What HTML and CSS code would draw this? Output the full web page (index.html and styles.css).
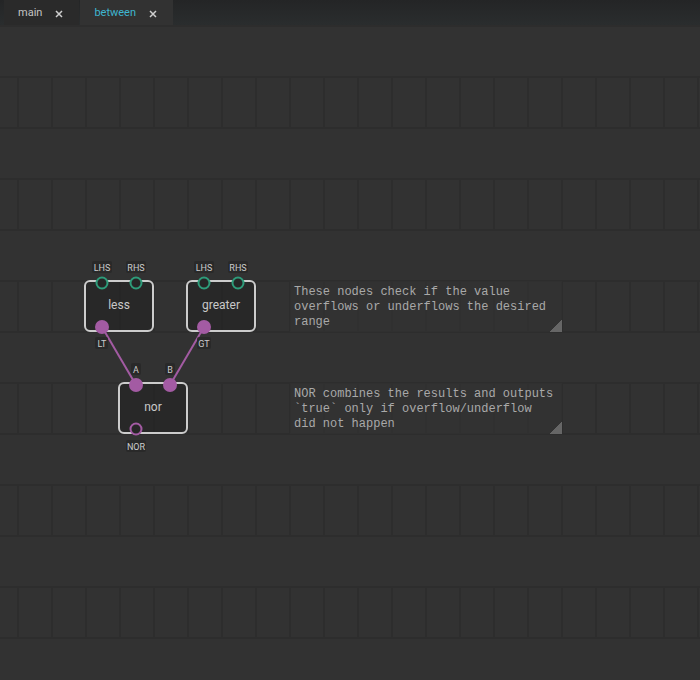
FILE: index.html
```html
<!DOCTYPE html>
<html>
<head>
<meta charset="utf-8">
<link rel="stylesheet" href="styles.css">
</head>
<body>
<div class="app">
  <div class="tabbar">
    <div class="tab">
      <span class="tab-title">main</span>
      <svg class="tab-close" width="8" height="8" viewBox="0 0 8 8"><path d="M1 1L7 7M7 1L1 7"/></svg>
    </div>
    <div class="tab tab-active">
      <span class="tab-title">between</span>
      <svg class="tab-close" width="8" height="8" viewBox="0 0 8 8"><path d="M1 1L7 7M7 1L1 7"/></svg>
    </div>
  </div>
  <div class="canvas">
    <svg class="diagram" width="700" height="655" viewBox="0 25 700 655">
      <line class="link" x1="102" y1="327" x2="136" y2="385"/>
      <line class="link" x1="204" y1="327" x2="170" y2="385"/>

      <!-- less -->
      <rect class="node-body" x="85" y="281" width="68" height="50" rx="5"/>
      <text class="node-title" x="119" y="309">less</text>
      <rect class="pin-label-bg" x="92" y="261" width="20" height="12" rx="2"/>
      <text class="pin-label" x="102" y="270.5">LHS</text>
      <rect class="pin-label-bg" x="126" y="261" width="20" height="12" rx="2"/>
      <text class="pin-label" x="136" y="270.5">RHS</text>
      <circle class="pin pin-num" cx="102" cy="283" r="5.5"/>
      <circle class="pin pin-num" cx="136" cy="283" r="5.5"/>
      <circle class="pin-fill" cx="102" cy="327" r="7"/>
      <rect class="pin-label-bg" x="95" y="337" width="13" height="12" rx="2"/>
      <text class="pin-label" x="102" y="346.5">LT</text>

      <!-- greater -->
      <rect class="node-body" x="187" y="281" width="68" height="50" rx="5"/>
      <text class="node-title" x="221" y="309">greater</text>
      <rect class="pin-label-bg" x="194" y="261" width="20" height="12" rx="2"/>
      <text class="pin-label" x="204" y="270.5">LHS</text>
      <rect class="pin-label-bg" x="228" y="261" width="20" height="12" rx="2"/>
      <text class="pin-label" x="238" y="270.5">RHS</text>
      <circle class="pin pin-num" cx="204" cy="283" r="5.5"/>
      <circle class="pin pin-num" cx="238" cy="283" r="5.5"/>
      <circle class="pin-fill" cx="204" cy="327" r="7"/>
      <rect class="pin-label-bg" x="197" y="337" width="14" height="12" rx="2"/>
      <text class="pin-label" x="204" y="346.5">GT</text>

      <!-- nor -->
      <rect class="node-body" x="119" y="383" width="68" height="50" rx="5"/>
      <text class="node-title" x="153" y="411">nor</text>
      <rect class="pin-label-bg" x="131" y="363" width="10" height="12" rx="2"/>
      <text class="pin-label" x="136" y="372.5">A</text>
      <rect class="pin-label-bg" x="165" y="363" width="10" height="12" rx="2"/>
      <text class="pin-label" x="170" y="372.5">B</text>
      <circle class="pin-fill" cx="136" cy="385" r="7"/>
      <circle class="pin-fill" cx="170" cy="385" r="7"/>
      <circle class="pin pin-bool" cx="136" cy="429" r="5.5"/>
      <rect class="pin-label-bg" x="126" y="440" width="20" height="12" rx="2"/>
      <text class="pin-label" x="136" y="449.5">NOR</text>
    </svg>

    <div class="comment comment-1">These nodes check if the value
overflows or underflows the desired
range<span class="resize"></span></div>
    <div class="comment comment-2">NOR combines the results and outputs
`true` only if overflow/underflow
did not happen<span class="resize"></span></div>
  </div>
</div>
</body>
</html>
```

FILE: styles.css
```css
html, body {
  margin: 0;
  padding: 0;
  background: #323232;
}
.app {
  width: 700px;
  height: 680px;
  overflow: hidden;
  font-family: Roboto, "Liberation Sans", sans-serif;
}
.tabbar {
  height: 25px;
  display: flex;
  gap: 1px;
  padding-left: 4px;
  background: linear-gradient(to bottom, #242526, #2a2d2e);
}
.tab {
  display: flex;
  align-items: center;
  gap: 13px;
  padding: 0 16px 0 14px;
  background: #2a2a2a;
  height: 25px;
}
.tab-active {
  background: #323232;
}
.tab-title {
  font-size: 11px;
  color: #c4c4c4;
  line-height: 25px;
}
.tab-active .tab-title {
  color: #3fb5cf;
}
.tab-close {
  display: block;
  stroke: #cfcfcf;
  stroke-width: 1.5;
  fill: none;
  margin-top: 2px;
}
.canvas {
  position: relative;
  height: 655px;
  background-color: #323232;
  background-image:
    linear-gradient(to bottom, #2d2d2d 0 2px, transparent 2px),
    linear-gradient(to bottom, #323232 0 51px, transparent 51px),
    linear-gradient(to right, #2d2d2d 0 2px, transparent 2px);
  background-size: 100% 51px, 100% 102px, 34px 100%;
  background-position: 0 0, 0 0, 17px 0;
}
.diagram {
  position: absolute;
  left: 0;
  top: 0;
}
.link {
  stroke: #a35ba3;
  stroke-width: 2;
}
.node-body {
  fill: rgba(36, 36, 36, 0.7);
  stroke: #cccccc;
  stroke-width: 2;
}
.node-title {
  font-family: Roboto, "Liberation Sans", sans-serif;
  font-size: 12px;
  fill: #c8c8c8;
  text-anchor: middle;
}
.pin-label-bg {
  fill: rgba(40, 40, 40, 0.9);
}
.pin-label {
  font-family: Roboto, "Liberation Sans", sans-serif;
  font-size: 9px;
  fill: #cccccc;
  text-anchor: middle;
}
.pin {
  fill: #262626;
  stroke-width: 2;
}
.pin-num {
  stroke: #2e9c7a;
}
.pin-bool {
  stroke: #a35ba3;
}
.pin-fill {
  fill: #a35ba3;
}
.comment {
  position: absolute;
  width: 268px;
  height: 47px;
  padding: 4px 0 0 4px;
  font-family: "Liberation Mono", monospace;
  font-size: 12px;
  line-height: 15px;
  color: #a9a9a9;
  white-space: pre;
  background: rgba(50, 50, 50, 0.6);
}
.comment-1 {
  left: 290px;
  top: 256px;
}
.comment-2 {
  left: 290px;
  top: 358px;
}
.resize {
  position: absolute;
  right: 0;
  bottom: 0;
  width: 12px;
  height: 12px;
  background: linear-gradient(to bottom right, transparent 50%, #666 50%);
}
```
